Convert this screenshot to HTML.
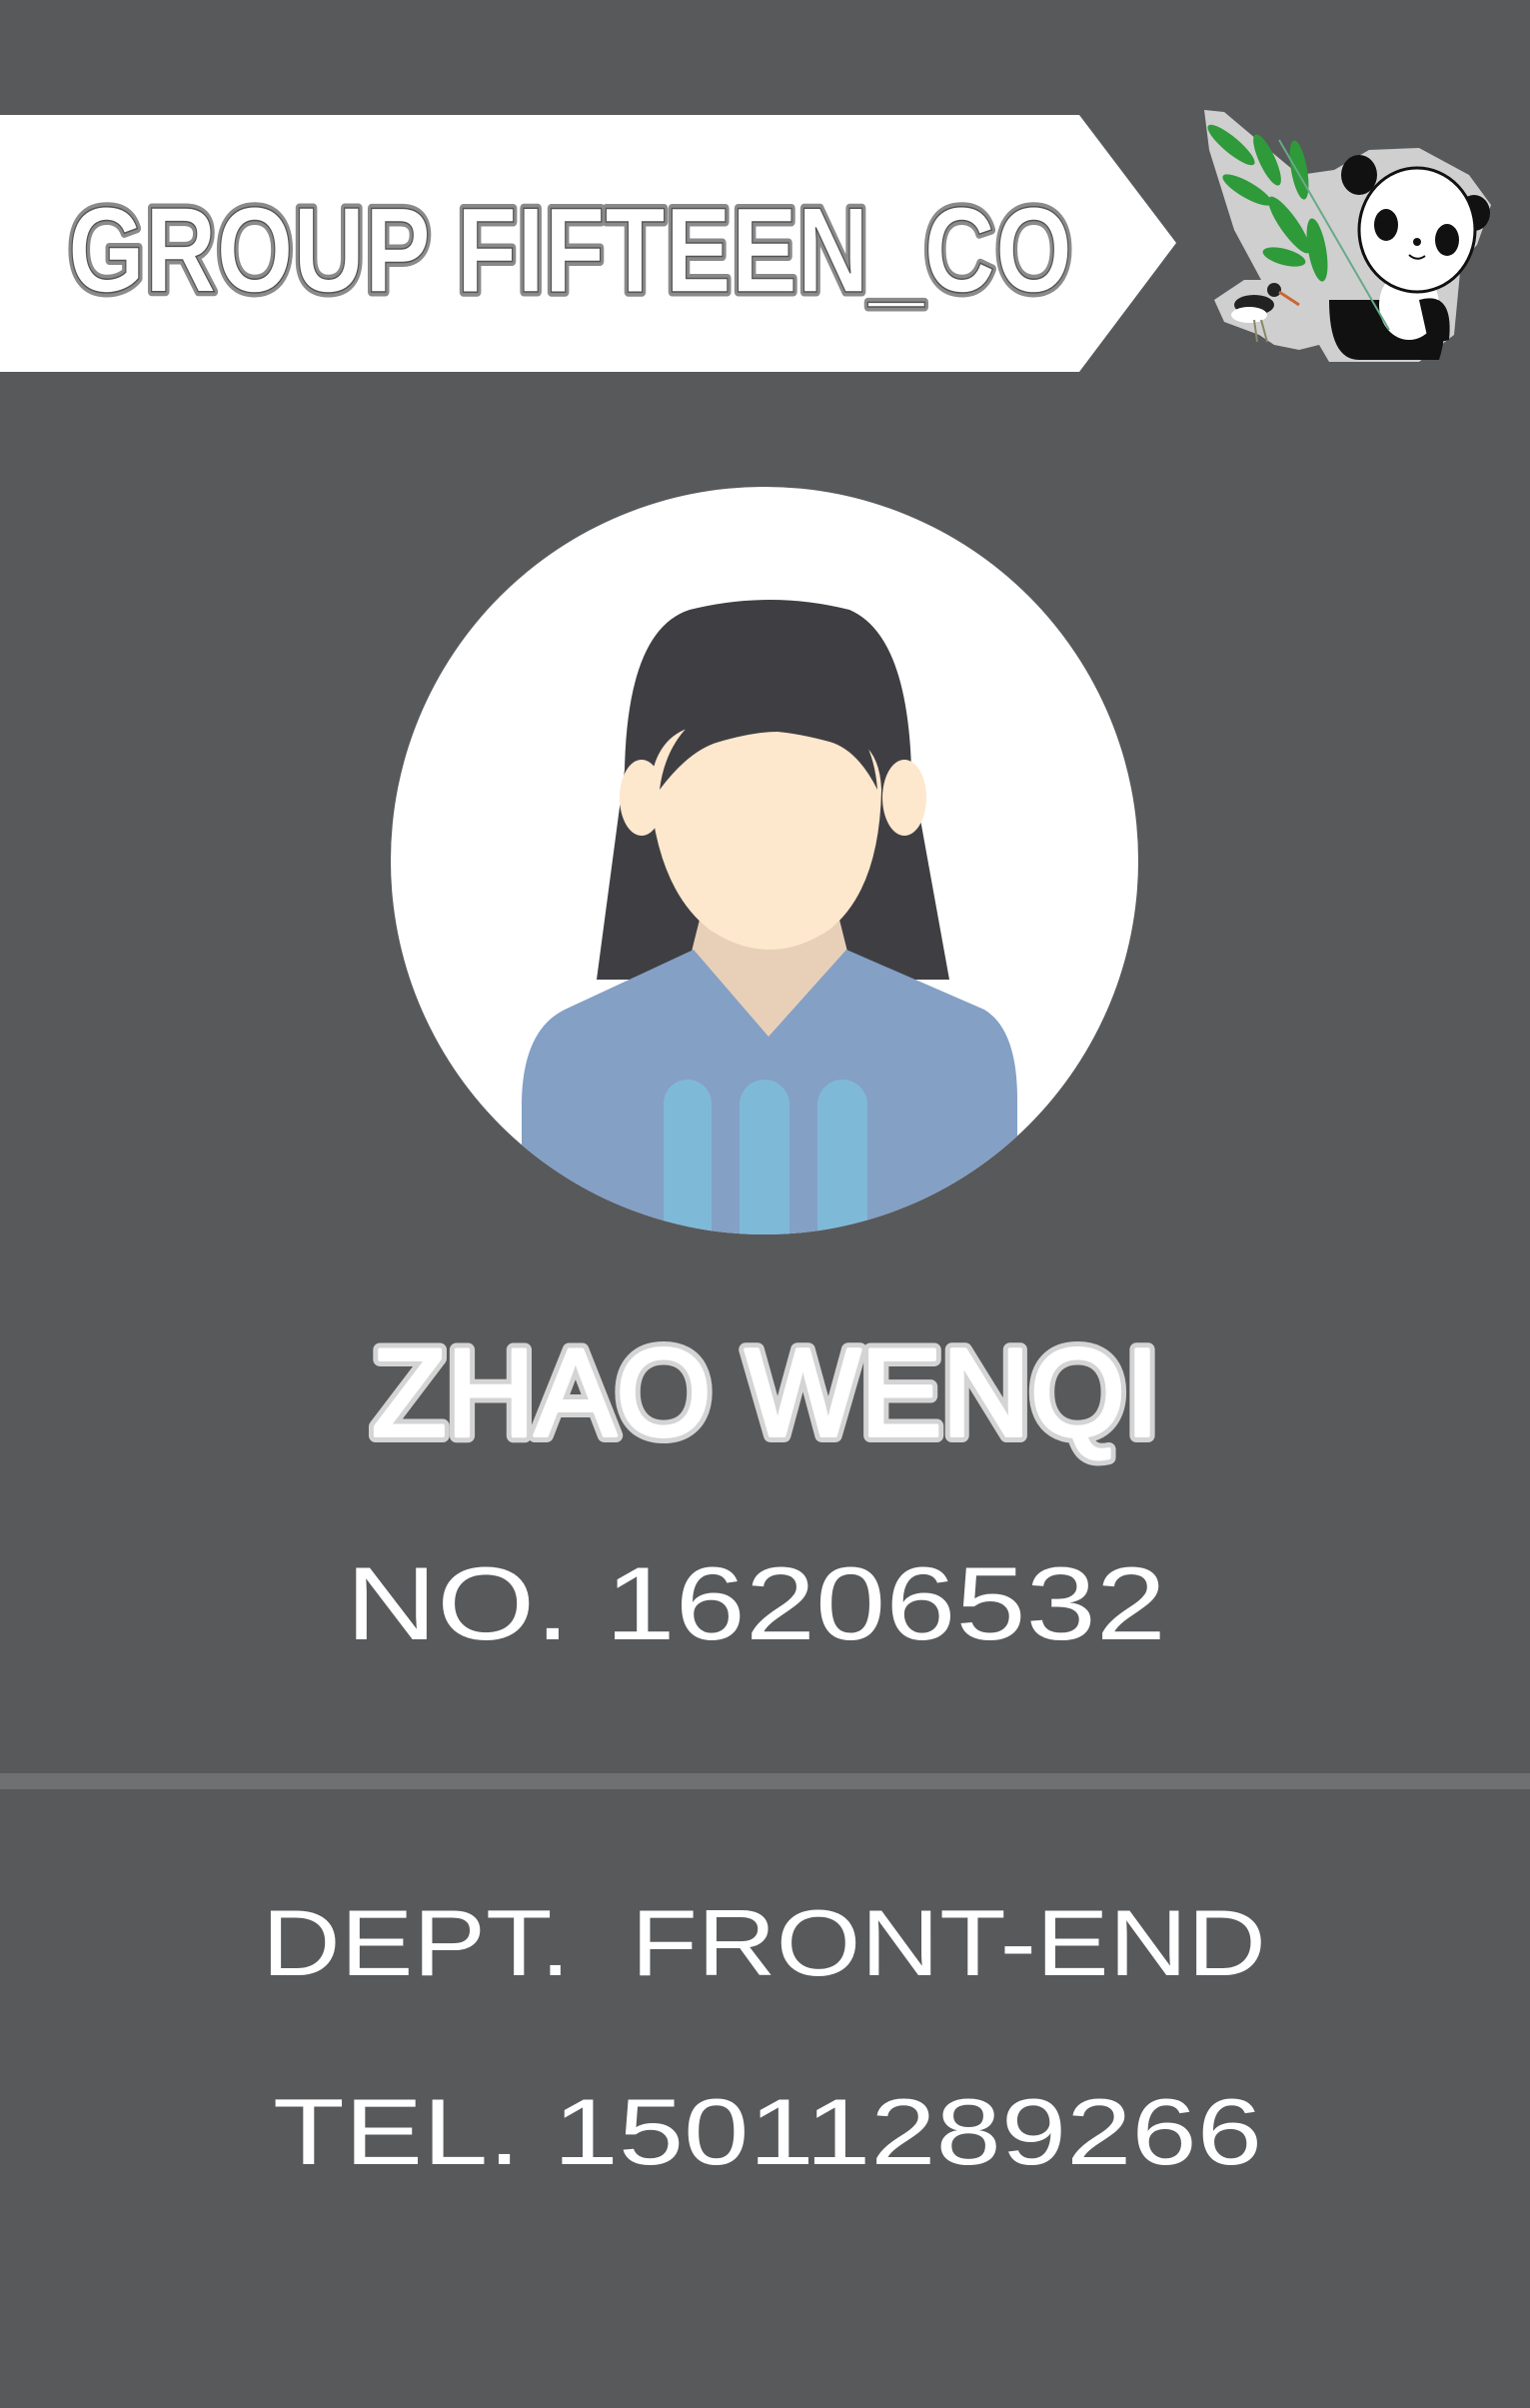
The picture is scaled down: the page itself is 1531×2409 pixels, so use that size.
<!DOCTYPE html>
<html><head><meta charset="utf-8"><style>
html,body{margin:0;padding:0;background:#58595b;}
svg{display:block}
</style></head><body>
<svg width="1531" height="2409" viewBox="0 0 1531 2409" xmlns="http://www.w3.org/2000/svg">
<rect width="1531" height="2409" fill="#58595b"/>
<!-- banner -->
<polygon points="0,115 1080,115 1177,243 1080,372 0,372" fill="#fff"/>
<text x="68" y="292" textLength="1005" lengthAdjust="spacingAndGlyphs" font-family="Liberation Sans, sans-serif" font-weight="bold" font-size="122" fill="#fff" stroke="#8a8a8c" stroke-width="9" paint-order="stroke" stroke-linejoin="round">GROUP FIFTEEN_CO</text>
<text x="68" y="292" textLength="1005" lengthAdjust="spacingAndGlyphs" font-family="Liberation Sans, sans-serif" font-weight="bold" font-size="122" fill="#fff" stroke="#555" stroke-width="1.5">GROUP FIFTEEN_CO</text>
<!-- panda logo -->
<g>
<path d="M1205,110 L1225,112 L1270,150 L1300,175 L1335,170 L1370,150 L1420,148 L1470,175 L1492,205 L1478,245 L1462,262 L1455,335 L1420,362 L1330,362 L1320,345 L1300,350 L1275,345 L1260,335 L1225,322 L1215,300 L1245,280 L1262,280 L1235,230 L1210,150 Z" fill="#cfcfcf"/>
<g fill="#2e9a3a">
<ellipse cx="1232" cy="145" rx="30" ry="8" transform="rotate(40 1232 145)"/>
<ellipse cx="1268" cy="160" rx="28" ry="8" transform="rotate(65 1268 160)"/>
<ellipse cx="1248" cy="190" rx="28" ry="8" transform="rotate(30 1248 190)"/>
<ellipse cx="1300" cy="170" rx="30" ry="8" transform="rotate(80 1300 170)"/>
<ellipse cx="1290" cy="225" rx="34" ry="9" transform="rotate(55 1290 225)"/>
<ellipse cx="1318" cy="250" rx="32" ry="9" transform="rotate(80 1318 250)"/>
<ellipse cx="1285" cy="257" rx="22" ry="8" transform="rotate(15 1285 257)"/>
</g>
<ellipse cx="1360" cy="175" rx="18" ry="20" fill="#111"/>
<ellipse cx="1475" cy="213" rx="16" ry="18" fill="#111"/>
<path d="M1330,300 Q1330,360 1360,360 L1440,360 Q1450,330 1440,300 Z" fill="#111"/>
<ellipse cx="1410" cy="305" rx="30" ry="35" fill="#fff"/>
<path d="M1420,300 Q1455,290 1450,340 L1430,345 Z" fill="#111"/>
<ellipse cx="1418" cy="230" rx="58" ry="62" fill="#fff" stroke="#111" stroke-width="3"/>
<ellipse cx="1387" cy="225" rx="12" ry="16" fill="#111"/>
<ellipse cx="1448" cy="240" rx="12" ry="16" fill="#111"/>
<circle cx="1418" cy="242" r="4" fill="#111"/>
<path d="M1410,255 Q1418,262 1426,256" fill="none" stroke="#111" stroke-width="2"/>
<line x1="1280" y1="140" x2="1390" y2="330" stroke="#6a8" stroke-width="2"/>
<ellipse cx="1255" cy="305" rx="20" ry="10" fill="#222"/>
<ellipse cx="1250" cy="315" rx="18" ry="8" fill="#fff"/>
<circle cx="1275" cy="290" r="7" fill="#222"/>
<line x1="1280" y1="292" x2="1300" y2="305" stroke="#c63" stroke-width="3"/>
<line x1="1255" y1="320" x2="1258" y2="342" stroke="#886" stroke-width="2"/>
<line x1="1262" y1="320" x2="1268" y2="342" stroke="#886" stroke-width="2"/>
</g>
<!-- avatar -->
<defs><clipPath id="c"><circle cx="765" cy="861" r="374"/></clipPath></defs>
<circle cx="765" cy="861" r="374" fill="#fff"/>
<g clip-path="url(#c)">
<g transform="translate(0,-10)">
<path d="M625,780 Q628,640 690,620 Q770,600 850,620 Q908,645 912,780 L950,990 L597,990 Z" fill="#3f3f43"/>
<ellipse cx="642" cy="808" rx="22" ry="38" fill="#fde7cd"/>
<ellipse cx="905" cy="808" rx="22" ry="38" fill="#fde7cd"/>
<polygon points="700,930 840,930 848,962 769,1050 692,962" fill="#e8d0b8"/>
<path d="M650,800 Q655,740 705,735 Q755,725 778,742 Q800,735 840,745 Q880,750 882,800 Q880,900 830,940 Q770,980 710,940 Q658,900 650,800 Z" fill="#fde7cd"/>
<path d="M660,800 Q690,760 720,752 Q755,742 778,742 Q745,700 690,735 Q665,760 660,800 Z" fill="#3f3f43"/>
<path d="M878,800 Q858,760 830,752 Q800,744 778,742 Q808,698 855,735 Q875,760 878,800 Z" fill="#3f3f43"/>
<path d="M522,1300 L522,1110 Q524,1040 565,1020 L694,960 L769,1047 L847,960 L985,1020 Q1018,1040 1018,1110 L1018,1300 Z" fill="#84a0c5"/>
<rect x="664" y="1090" width="48" height="220" rx="24" fill="#7fb9d8"/>
<rect x="740" y="1090" width="50" height="220" rx="25" fill="#7fb9d8"/>
<rect x="818" y="1090" width="50" height="220" rx="25" fill="#7fb9d8"/>
</g>
</g>
<!-- texts -->
<text x="372" y="1436" textLength="788" lengthAdjust="spacingAndGlyphs" font-family="Liberation Sans, sans-serif" font-size="124" fill="#fff" stroke="#d4d4d4" stroke-width="14" paint-order="stroke" stroke-linejoin="round">ZHAO WENQI</text>
<text x="372" y="1436" textLength="788" lengthAdjust="spacingAndGlyphs" font-family="Liberation Sans, sans-serif" font-size="124" fill="#fff" stroke="#fff" stroke-width="4" stroke-linejoin="round">ZHAO WENQI</text>
<text x="346" y="1640" textLength="821" lengthAdjust="spacingAndGlyphs" font-family="Liberation Sans, sans-serif" font-size="104" fill="#fff">NO. 16206532</text>
<rect x="0" y="1774" width="1531" height="16" fill="#6f7072"/>
<text x="262" y="1976" textLength="1005" lengthAdjust="spacingAndGlyphs" font-family="Liberation Sans, sans-serif" font-size="94" fill="#fff" xml:space="preserve">DEPT.  FRONT-END</text>
<text x="273" y="2165" textLength="990" lengthAdjust="spacingAndGlyphs" font-family="Liberation Sans, sans-serif" font-size="94" fill="#fff">TEL. 15011289266</text>
</svg>
</body></html>
